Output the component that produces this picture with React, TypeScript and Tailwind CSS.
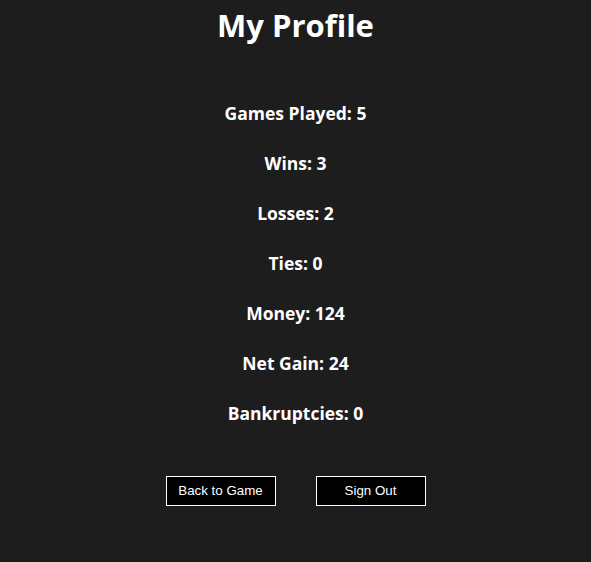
import React from "react";

const stats: [string, number][] = [
  ["Games Played", 5],
  ["Wins", 3],
  ["Losses", 2],
  ["Ties", 0],
  ["Money", 124],
  ["Net Gain", 24],
  ["Bankruptcies", 0],
];

export default function App() {
  return (
    <div className="min-h-[562px] w-full bg-[#1e1d1e] text-white flex flex-col items-center font-['Open_Sans',sans-serif]">
      <h1 className="mt-[5px] text-[31px] leading-[40px] font-bold">My Profile</h1>
      <div className="mt-[43px] flex flex-col items-center">
        {stats.map(([k, v]) => (
          <h3 key={k} className="text-[17.5px] leading-[50px] font-bold">
            {k}: {v}
          </h3>
        ))}
      </div>
      <div className="mt-[38px] flex gap-[40px] font-['Liberation_Sans',Arial,sans-serif]">
        <button className="w-[110px] h-[30px] bg-black border border-white text-white text-[13.333px]">Back to Game</button>
        <button className="w-[110px] h-[30px] bg-black border border-white text-white text-[13.333px]">Sign Out</button>
      </div>
    </div>
  );
}
